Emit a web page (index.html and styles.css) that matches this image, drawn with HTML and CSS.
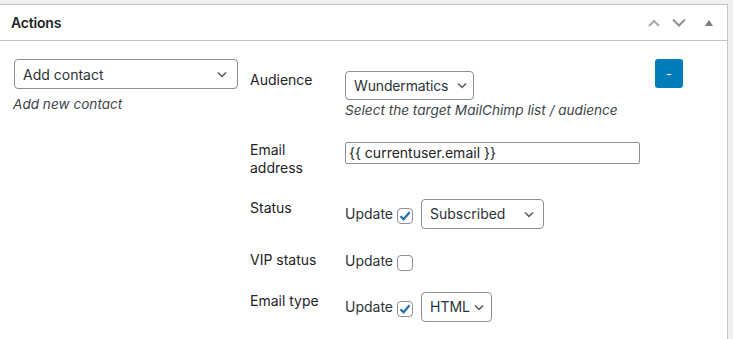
FILE: index.html
```html
<!DOCTYPE html>
<html>
<head>
<meta charset="utf-8">
<link rel="stylesheet" href="styles.css">
</head>
<body>
<div class="postbox">
  <div class="postbox-header">
    <h2 class="title">Actions</h2>
    <div class="handle-actions">
      <span class="hbtn up"><svg width="12" height="8" viewBox="0 0 12 8"><path d="M1 7 L6 2 L11 7" fill="none" stroke="#a7aaad" stroke-width="2"/></svg></span>
      <span class="hbtn down"><svg width="14" height="9" viewBox="0 0 14 9"><path d="M1 1.5 L7 7.5 L13 1.5" fill="none" stroke="#8c8f94" stroke-width="2"/></svg></span>
      <span class="hbtn toggle"><svg width="8" height="6" viewBox="0 0 8 6"><path d="M0 6 L4 0 L8 6 Z" fill="#787c82"/></svg></span>
    </div>
  </div>
  <div class="inside">
    <div class="action">
      <div class="action-type">
        <div class="select wide"><span>Add contact</span><svg class="chev" width="10" height="7" viewBox="0 0 10 7"><path d="M1 1.5 L5 5.5 L9 1.5" fill="none" stroke="#50575e" stroke-width="1.5"/></svg></div>
        <p class="desc">Add new contact</p>
      </div>
      <div class="fields">
        <div class="label">Audience</div>
        <div class="field">
          <div class="select aud"><span>Wundermatics</span><svg class="chev" width="10" height="7" viewBox="0 0 10 7"><path d="M1 1.5 L5 5.5 L9 1.5" fill="none" stroke="#50575e" stroke-width="1.5"/></svg></div>
          <p class="desc">Select the target MailChimp list / audience</p>
        </div>

        <div class="label">Email address</div>
        <div class="field">
          <div class="input">{{ currentuser.email }}</div>
        </div>

        <div class="label">Status</div>
        <div class="field inline">
          <span class="update">Update</span>
          <span class="checkbox checked"><svg width="14" height="14" viewBox="0 0 14 14"><path d="M2.5 7.2 L5.6 10.3 L11.6 3.2" fill="none" stroke="#2271b1" stroke-width="2.2"/></svg></span>
          <div class="select sub"><span>Subscribed</span><svg class="chev" width="10" height="7" viewBox="0 0 10 7"><path d="M1 1.5 L5 5.5 L9 1.5" fill="none" stroke="#50575e" stroke-width="1.5"/></svg></div>
        </div>

        <div class="label">VIP status</div>
        <div class="field inline vip">
          <span class="update">Update</span>
          <span class="checkbox"></span>
        </div>

        <div class="label">Email type</div>
        <div class="field inline">
          <span class="update">Update</span>
          <span class="checkbox checked"><svg width="14" height="14" viewBox="0 0 14 14"><path d="M2.5 7.2 L5.6 10.3 L11.6 3.2" fill="none" stroke="#2271b1" stroke-width="2.2"/></svg></span>
          <div class="select html"><span>HTML</span><svg class="chev" width="10" height="7" viewBox="0 0 10 7"><path d="M1 1.5 L5 5.5 L9 1.5" fill="none" stroke="#50575e" stroke-width="1.5"/></svg></div>
        </div>
      </div>
      <button class="remove">-</button>
    </div>
  </div>
</div>
</body>
</html>
```

FILE: styles.css
```css
* { box-sizing: border-box; }
html, body {
  margin: 0;
  padding: 0;
  height: 339px;
  background: #f0f0f1;
  font-family: Inter, "Noto Sans", sans-serif;
  color: #1d2327;
  overflow: hidden;
}
.postbox {
  margin: 4px 5px 0 -1px;
  background: #fff;
  border: 1px solid #c3c4c7;
  height: 336px;
}
.postbox-header {
  display: flex;
  align-items: center;
  height: 36px;
  border-bottom: 1px solid #c3c4c7;
}
.title {
  margin: 0;
  padding-left: 11px;
  font-size: 14px;
  font-weight: 600;
  flex: 1;
  color: #1d2327;
  letter-spacing: -0.2px;
}
.handle-actions {
  display: flex;
  align-items: center;
  height: 100%;
}
.hbtn {
  display: flex;
  align-items: center;
  justify-content: center;
  height: 100%;
}
.hbtn.up { width: 25px; }
.hbtn.down { width: 25px; }
.hbtn.toggle { width: 36px; }

.inside {
  padding: 18px 0 0 14px;
}
.action {
  display: flex;
  align-items: flex-start;
}
.action-type {
  width: 224px;
}
.select {
  display: flex;
  align-items: center;
  justify-content: space-between;
  height: 30px;
  border: 1px solid #8c8f94;
  border-radius: 4px;
  padding: 0 9px 0 8px;
  font-size: 14px;
  color: #2c3338;
  background: #fff;
}
.select .chev { flex: none; }
.select.wide { width: 224px; padding-right: 10px; }
.select.aud { width: 129px; height: 29px; padding-right: 6px; letter-spacing: -0.15px; }
.select.sub { width: 123px; padding-right: 9px; }
.select.html { width: 71px; padding-right: 7px; }
.desc {
  margin: 6px 0 0 -1px;
  font-size: 13.6px;
  font-style: italic;
  color: #3c434a;
  line-height: 18px;
}
.field .desc { margin: 1px 0 0 0; }
.fields {
  margin-left: 12px;
  margin-top: 12px;
  width: 405px;
  display: grid;
  grid-template-columns: 95px 1fr;
  row-gap: 22px;
  font-size: 14px;
  line-height: 18px;
}
.label {
  color: #1d2327;
  width: 70px;
}
.field.inline {
  display: flex;
  align-items: center;
  align-self: start;
}
.field.vip { height: 18px; margin-top: 1px; }
.input {
  width: 295px;
  height: 22px;
  margin-top: 1px;
  border: 1px solid #8c8f94;
  border-radius: 2px;
  padding: 0 3px;
  font-size: 14px;
  line-height: 20px;
  color: #1d2327;
}
.update {
  color: #2c3338;
  margin-right: 4px;
}
.checkbox {
  display: inline-flex;
  align-items: center;
  justify-content: center;
  width: 16px;
  height: 16px;
  border: 1px solid #8c8f94;
  border-radius: 4px;
  background: #fff;
  margin-top: 3px;
}
.field.inline .select { margin-left: 8px; }
.remove {
  margin-left: 0;
  width: 28px;
  height: 29px;
  border: 0;
  border-radius: 3px;
  background: #007cba;
  color: #fff;
  font-family: Inter, sans-serif;
  font-size: 13px;
  padding: 0;
}
```
